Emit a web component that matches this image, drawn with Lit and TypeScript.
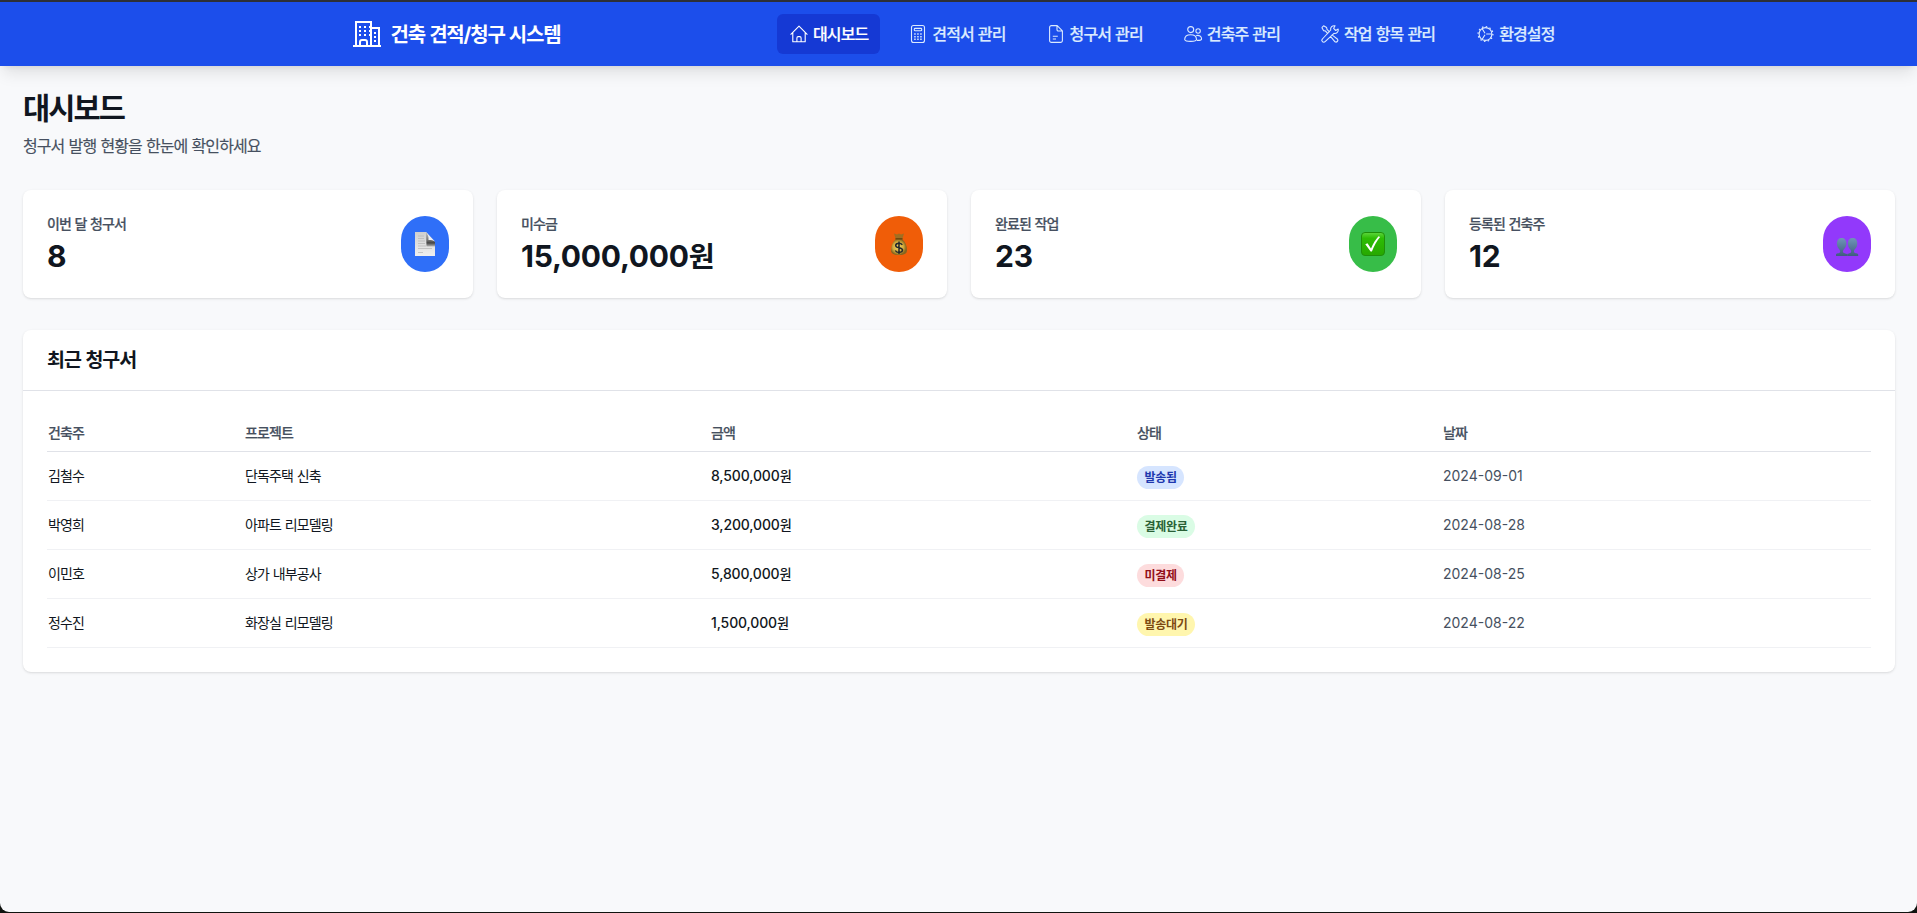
import { LitElement, html, css, svg, TemplateResult } from "lit";
import { customElement, property } from "lit/decorators.js";

const money = (text: string) => html`<span class="num">${text}</span><span class="won">원</span>`;

const icons: Record<string, TemplateResult> = {
  home: svg`<path d="M1.600 10.600 10 2.200l8.400 8.400M3.800 8.800v8.900h12.400V8.800M7.900 17.500v-3.600a1.300 1.300 0 0 1 1.300-1.300h1.600a1.300 1.300 0 0 1 1.300 1.300v3.600"/>`,
  calc: svg`<rect x="3.500" y="1.500" width="13" height="17" rx="2"/><rect x="6.300" y="4.400" width="7.400" height="2.400" rx=".8"/><path stroke-width="1.500" stroke-dasharray="1.500 1.500" d="M6.200 10h8M6.200 12.700h8M6.200 15.300h8"/>`,
  doc: svg`<path d="M3.600 3.400a1.800 1.800 0 0 1 1.800-1.800h5.800l5.200 5.200v9.800a1.800 1.800 0 0 1-1.800 1.800H5.400a1.800 1.800 0 0 1-1.800-1.800zM11 1.800v3.900a1.300 1.300 0 0 0 1.300 1.300h3.900M6.800 12.200h5M6.800 15h3.200"/>`,
  people: svg`<circle cx="7.700" cy="5.600" r="3"/><circle cx="15.100" cy="7" r="2.200"/><path d="M1.700 15.600c0-3 2.600-4.800 6-4.800s5.800 1.800 5.800 4.800c0 1.200-2 1.800-5.800 1.800s-6-.6-6-1.800zM13.200 11.600c3-.8 5.400.9 5.400 3.400 0 1-1.600 1.500-4.600 1.400"/>`,
  tools: svg`<path d="M1.800 3.600 3.600 1.800l3 1.700.4 1.900 2.700 2.800M1.800 3.600l1.700 3 1.900.4 2.700 2.800M11.700 10.600l5.900 4.600a1.900 1.900 0 0 1-2.600 2.600l-4.700-5.700M18.200 5.100l-2.500 1.400-2.100-2.100L15 1.800c-2.600-.6-4.900 1.600-4.300 4.200L2.400 15a1.900 1.900 0 0 0 2.700 2.700L14 9.400c2.600.5 4.800-1.700 4.200-4.300z"/>`,
  gear: svg`<circle cx="10.500" cy="10" r="6.400"/><circle cx="10.500" cy="10" r="7.400" stroke-width="1.300" stroke-dasharray="1.500 2.375"/><path d="M11.200 10h5.600M10 9.300 7.200 4.700M10 10.700l-2.800 4.600"/>`,
};

const emojis: Record<string, TemplateResult> = {
  page: svg`
    <defs>
      <linearGradient id="pg" x2="0" y2="1"><stop stop-color="#cfcfcf"/><stop offset="1" stop-color="#efefef"/></linearGradient>
      <linearGradient id="sh" x2="0" y2="1"><stop stop-color="#c4c4c4"/><stop offset=".55" stop-color="#777"/><stop offset=".75" stop-color="#444"/><stop offset="1" stop-color="#b5b5b5"/></linearGradient>
    </defs>
    <path fill="url(#pg)" d="M2 0h11l9 11v13H2z"/>
    <path fill="url(#sh)" d="M13 0l9 10v4.500h-8.500z"/>
    <path fill="#eceff5" d="M13 0l9 9.500c-2.500-1.500-5-1.800-6.500-1.500.3-3-.5-5.500-2.500-8z"/>
    <path stroke="#b4b4b4" stroke-width=".7" d="M5 4h6M5 6.500h6M5 9h7M5 11.500h7M5 14h8M5 16.500h14M5 20.500h5"/>`,
  money: svg`
    <defs><radialGradient id="bag" cx=".45" cy=".5"><stop stop-color="#f5d96c"/><stop offset=".65" stop-color="#d2aa3c"/><stop offset="1" stop-color="#85651e"/></radialGradient></defs>
    <path fill="#a06f22" d="M7 1.500l3 1 2-1 2 1 3-1-2 6.500H9z"/>
    <path fill="url(#bag)" d="M9 7h6c3 2.500 5 6.500 5 11 0 3.500-2 5-8 5s-8-1.500-8-5C4 13.500 6 9.500 9 7z"/>
    <path fill="#70480f" d="M8.500 6h7v1.500h-7z"/>
    <path fill="none" stroke="#22272c" stroke-width="1.500" d="M15.300 12.800c-.8-1.200-2-1.600-3.300-1.600-2 0-3.300.9-3.300 2.300 0 3.200 6.800 1.500 6.800 4.600 0 1.500-1.500 2.300-3.500 2.300-1.600 0-3-.6-3.700-1.900M12 9.500v12.500"/>`,
  check: svg`
    <defs><linearGradient id="ck" x2="0" y2="1"><stop stop-color="#5fd63e"/><stop offset=".25" stop-color="#2dbd05"/><stop offset="1" stop-color="#27a800"/></linearGradient></defs>
    <rect x=".5" y=".5" width="23" height="23" rx="3.500" fill="url(#ck)" stroke="#1f8f0a"/>
    <path fill="#fff" d="M4.300 12.200l2.200-1 3.500 5.300c2-5 4.500-8.800 7.500-12.200l1.600.6c-3.500 4.300-6 9-8.200 14.600H9.600z"/>`,
  users: svg`
    <defs><linearGradient id="us" x2="0" y2="1"><stop stop-color="#6f96b8"/><stop offset="1" stop-color="#3f5c80"/></linearGradient></defs>
    <path fill="url(#us)" d="M12.200 24v-1.500c0-1 3-1 3.800-2.200.4-.8 0-2-.6-2.800-1.800-1.500-2.500-3.800-2.500-6C12.900 8 14.700 6 17.600 6s4.700 2 4.700 5.500c0 2.500-1 4.600-2.700 6-.6.800-.8 2-.4 2.800.6 1.200 4 1 4 2.200V24z"/>
    <path fill="url(#us)" d="M1 24v-1.500c0-1.200 3.400-1 4-2.200.4-.8 0-2-.6-2.800-1.500-1.500-2.500-3.500-2.500-6C1.900 8 3.700 6 6.600 6s4.800 2 4.800 5.500c0 2.300-1 4.500-2.700 6-.6.800-1 2-.6 2.800.8 1.200 4 1.200 4 2.200V24z"/>`,
};

const base = css`
  :host {
    font-family: Inter, "Noto Sans CJK KR", sans-serif;
    letter-spacing: -0.055em;
    word-spacing: 0.04em;
  }
  .num { letter-spacing: 0; }
  * { box-sizing: border-box; }
`;

@customElement("app-header")
class AppHeader extends LitElement {
  static styles = [base, css`
    :host { display: block; position: relative; z-index: 1; }
    .bar {
      height: 66px;
      border-top: 2px solid #2d2f36;
      background: #1c4eeb;
      box-shadow: 0 10px 15px -3px rgb(0 0 0 / .1), 0 4px 6px -4px rgb(0 0 0 / .1);
    }
    .inner {
      width: 1216px;
      height: 64px;
      margin: 0 auto;
      display: flex;
      align-items: center;
      justify-content: space-between;
      color: #fff;
    }
    .brand {
      display: flex; align-items: center; gap: 8px; padding-bottom: 2px;
      font-size: 20px; font-weight: 700; letter-spacing: -0.059em; white-space: nowrap;
    }
    .brand svg { width: 32px; height: 32px; fill: none; stroke: #fff; stroke-width: 2; }
    nav { display: flex; gap: 16px; }
    .item {
      display: flex; align-items: center; gap: 4px;
      height: 40px; padding: 0 12px; border-radius: 6px;
      color: #dbeafe; font-size: 16px; font-weight: 500; line-height: 24px; white-space: nowrap;
      -webkit-text-stroke: .2px currentColor;
    }
    .item.active { background: #1539d4; color: #fff; }
    .item svg { width: 20px; height: 20px; fill: none; stroke: currentColor; stroke-width: 1.1; stroke-linejoin: round; stroke-linecap: butt; }
  `];

  items = [
    ["home", "대시보드"], ["calc", "견적서 관리"], ["doc", "청구서 관리"],
    ["people", "건축주 관리"], ["tools", "작업 항목 관리"], ["gear", "환경설정"],
  ];

  render() {
    return html`<div class="bar"><div class="inner">
      <div class="brand">
        <svg viewBox="0 0 32 32">
          <path d="M2 29h28M5 29V5h15v24M20 11h8v18M9 29v-4a2 2 0 0 1 2-2h3a2 2 0 0 1 2 2v4"/>
          <path stroke-dasharray="2 3" d="M8 10h12M8 14h12M8 18h12"/>
          <path stroke-dasharray="2 2" d="M24 15v10"/>
        </svg>
        <span>건축 견적/청구 시스템</span>
      </div>
      <nav>${this.items.map(([icon, label], i) => html`
        <a class="item ${i === 0 ? "active" : ""}"><svg viewBox="0 0 20 20">${icons[icon]}</svg><span>${label}</span></a>`)}
      </nav>
    </div></div>`;
  }
}

@customElement("stat-card")
class StatCard extends LitElement {
  @property() label = "";
  @property() value = "";
  @property({ type: Boolean }) won = false;
  @property() icon = "page";

  static styles = [base, css`
    :host {
      display: flex; align-items: center; justify-content: space-between;
      height: 108px; padding: 24px; border-radius: 8px; background: #fff;
      box-shadow: 0 1px 3px rgb(0 0 0 / .1), 0 1px 2px -1px rgb(0 0 0 / .1);
    }
    .label { font-size: 14px; line-height: 20px; font-weight: 500; color: #465060; -webkit-text-stroke: .2px currentColor; }
    .value { margin-top: 4px; font-size: 30px; line-height: 36px; font-weight: 700; color: #101620; white-space: nowrap; }
    .value .num { letter-spacing: -0.008em; }
    .won { font-size: .94em; }
    .pill { display: grid; place-items: center; width: 48px; height: 56px; border-radius: 24px; }
    .pill svg { width: 24px; height: 24px; }
    .page { background: #2f6ff8; }
    .money { background: #f05d08; }
    .check { background: #37bd48; }
    .users { background: #9239fb; }
  `];

  render() {
    return html`
      <div>
        <div class="label">${this.label}</div>
        <div class="value">${this.won ? money(this.value) : html`<span class="num">${this.value}</span>`}</div>
      </div>
      <div class="pill ${this.icon}"><svg viewBox="0 0 24 24">${emojis[this.icon]}</svg></div>`;
  }
}

@customElement("invoice-table")
class InvoiceTable extends LitElement {
  static styles = [base, css`
    :host {
      display: block; border-radius: 8px; background: #fff; color: #101620;
      box-shadow: 0 1px 3px rgb(0 0 0 / .1), 0 1px 2px -1px rgb(0 0 0 / .1);
    }
    h2 {
      margin: 0; padding: 16px 24px; font-size: 19.5px; line-height: 28px; font-weight: 600;
      letter-spacing: -0.052em; border-bottom: 1px solid #e0e2e8;
    }
    .body { padding: 24px; }
    .row {
      display: grid; grid-template-columns: 197px 466px 426px 306px 1fr;
      align-items: center; height: 49px; padding-left: 1px;
      border-bottom: 1px solid #f0f1f4; font-size: 14px; line-height: 20px;
    }
    .head { height: 37px; border-color: #e0e2e8; color: #465060; font-weight: 500; -webkit-text-stroke: .2px currentColor; }
    .amount { font-weight: 500; }
    .amount .num { letter-spacing: -0.01em; }
    .won { font-size: .94em; }
    .date { color: #465060; letter-spacing: 0; }
    .badge {
      justify-self: start; height: 23px; margin-top: 3px; padding: 0 7px 0 7.5px; border-radius: 12px;
      font-size: 12px; line-height: 23px; font-weight: 600; letter-spacing: -0.25px;
    }
    .sent { background: #d6e5ff; color: #2038ae; }
    .paid { background: #dafce5; color: #2a6136; }
    .unpaid { background: #fddcdd; color: #920f19; }
    .waiting { background: #fff6ae; color: #7d4a12; }
  `];

  rows = [
    ["김철수", "단독주택 신축", "8,500,000", "발송됨", "sent", "2024-09-01"],
    ["박영희", "아파트 리모델링", "3,200,000", "결제완료", "paid", "2024-08-28"],
    ["이민호", "상가 내부공사", "5,800,000", "미결제", "unpaid", "2024-08-25"],
    ["정수진", "화장실 리모델링", "1,500,000", "발송대기", "waiting", "2024-08-22"],
  ];

  render() {
    return html`
      <h2>최근 청구서</h2>
      <div class="body">
        <div class="row head">${["건축주", "프로젝트", "금액", "상태", "날짜"].map((t) => html`<span>${t}</span>`)}</div>
        ${this.rows.map(([client, project, amount, status, kind, date]) => html`
          <div class="row">
            <span>${client}</span><span>${project}</span><span class="amount">${money(amount)}</span>
            <span class="badge ${kind}">${status}</span><span class="date">${date}</span>
          </div>`)}
      </div>`;
  }
}

@customElement("app-root")
class AppRoot extends LitElement {
  static styles = [base, css`
    :host { display: block; height: 913px; overflow: hidden; background: #10130f; }
    .window { height: 912px; overflow: hidden; background: #f8f9fb; border-radius: 0 0 9px 9px; }
    main { padding: 24px 22px 0 23px; }
    h1 { margin: 0; font-size: 29.5px; line-height: 36px; font-weight: 700; letter-spacing: -0.063em; color: #101620; }
    .sub { margin: 8px 0 32px; font-size: 16px; line-height: 24px; letter-spacing: -0.058em; color: #465060; -webkit-text-stroke: .15px currentColor; }
    .cards { display: grid; grid-template-columns: repeat(4, 1fr); gap: 24px; margin-bottom: 32px; }
  `];

  render() {
    return html`<div class="window">
      <app-header></app-header>
      <main>
        <h1>대시보드</h1>
        <p class="sub">청구서 발행 현황을 한눈에 확인하세요</p>
        <div class="cards">
          <stat-card label="이번 달 청구서" value="8" icon="page"></stat-card>
          <stat-card label="미수금" value="15,000,000" won icon="money"></stat-card>
          <stat-card label="완료된 작업" value="23" icon="check"></stat-card>
          <stat-card label="등록된 건축주" value="12" icon="users"></stat-card>
        </div>
        <invoice-table></invoice-table>
      </main>
    </div>`;
  }
}
